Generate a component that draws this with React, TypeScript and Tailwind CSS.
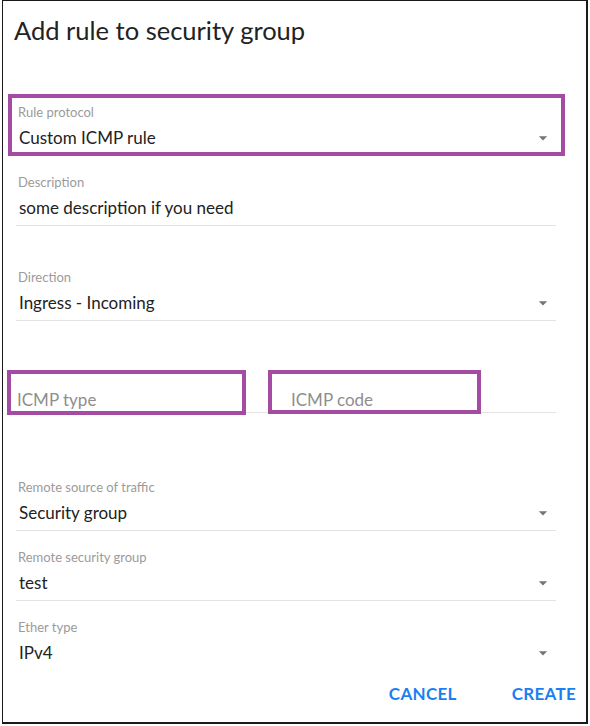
import React from 'react';

type FieldProps = {
  label?: string;
  value?: string;
  placeholder?: string;
  select?: boolean;
  noLine?: boolean;
  className?: string;
  children?: React.ReactNode;
};

function Arrow() {
  return (
    <svg width="20" height="20" viewBox="0 0 24 24" className="absolute right-[3px] top-1/2 -translate-y-1/2">
      <path d="M7 10l5 5 5-5z" fill="#757575" />
    </svg>
  );
}

function Field({ label, value, placeholder, select, noLine, className = '', children }: FieldProps) {
  return (
    <div className={`relative ${className}`}>
      <div className="h-4 pl-[2px] text-[13px] leading-4 text-[#9b9b9b]">{label}</div>
      {placeholder ? (
        <div className="relative flex h-[35px] items-end pb-[2px] pl-[1px] text-[17px] leading-5 text-[#8e8e8e]">{placeholder}</div>
      ) : (
        <div className="relative flex h-[35px] items-center pl-[3px] text-[17px] text-[#222]">
          {value}
          {select && <Arrow />}
        </div>
      )}
      <div className={`h-px ${noLine ? 'bg-transparent' : 'bg-[#e2e2e2]'}`} />
      {children}
    </div>
  );
}

// 보라색 강조 박스
function Mark({ className }: { className: string }) {
  return <div className={`pointer-events-none absolute border-4 border-[#a44ca3] ${className}`} />;
}

export default function App() {
  return (
    <div className="h-[726px] w-[590px] bg-white" style={{ fontFamily: 'Lato, "Noto Sans", sans-serif' }}>
      <div className="ml-[2px] flex h-[724px] w-[586px] flex-col border-t border-l border-r-2 border-b-2 border-[#1a1a1a]">
        <div className="pl-[11px] pt-[13px] text-[25.5px] leading-8 text-[#222]">Add rule to security group</div>

        <div className="flex flex-col pl-[13px] pr-[30px]">
          <Field label="Rule protocol" value="Custom ICMP rule" select className="mt-[58px]">
            <Mark className="-left-[8px] -right-[9px] -top-[10px] bottom-0" />
          </Field>
          <Field label="Description" value="some description if you need" className="mt-[18px]" />
          <Field label="Direction" value="Ingress - Incoming" select className="mt-[43px]" />

          <div className="mt-[40px] flex gap-2">
            <Field placeholder="ICMP type" className="flex-1">
              <Mark className="-left-[9px] top-[9px] -bottom-[2px] w-[239px]" />
            </Field>
            <Field placeholder="ICMP code" className="flex-1">
              <Mark className="-left-[22px] top-[9px] -bottom-[1px] w-[213px]" />
            </Field>
          </div>

          <Field label="Remote source of traffic" value="Security group" select className="mt-[66px]" />
          <Field label="Remote security group" value="test" select className="mt-[18px]" />
          <Field label="Ether type" value="IPv4" select noLine className="mt-[18px]" />
        </div>

        <div className="mt-[5px] flex justify-end gap-[39px] pr-[2px]">
          <button className="h-9 px-2 text-[17px] font-bold tracking-[0.3px] text-[#1a7ff0]">CANCEL</button>
          <button className="h-9 px-2 text-[17px] font-bold tracking-[0.3px] text-[#1a7ff0]">CREATE</button>
        </div>
      </div>
    </div>
  );
}
